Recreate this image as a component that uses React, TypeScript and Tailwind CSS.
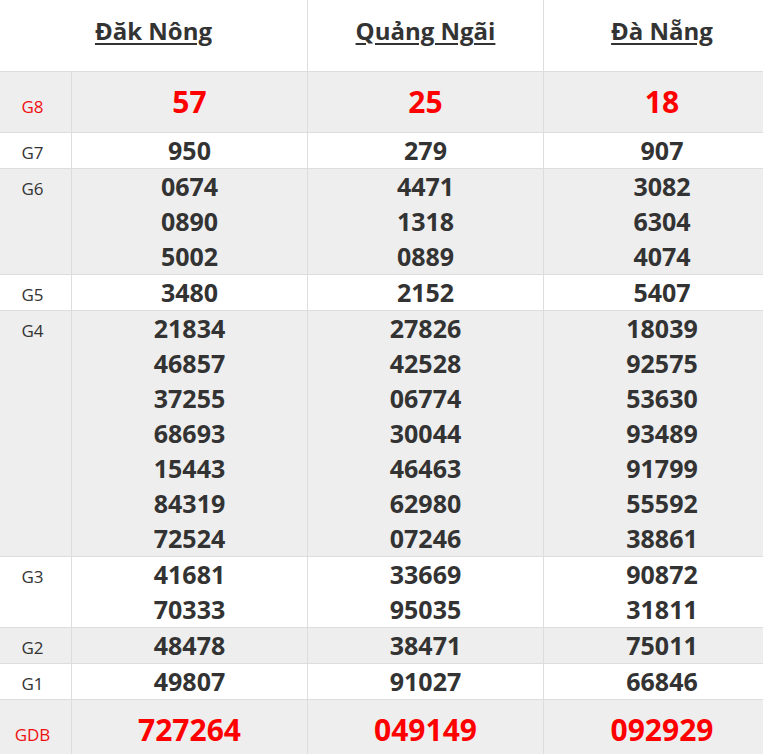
import React from "react";

type Row = {
  label: string;
  cols: string[][];
  big?: boolean;
  gray: boolean;
};

const rows: Row[] = [
  { label: "G8", cols: [["57"], ["25"], ["18"]], big: true, gray: true },
  { label: "G7", cols: [["950"], ["279"], ["907"]], gray: false },
  {
    label: "G6",
    cols: [
      ["0674", "0890", "5002"],
      ["4471", "1318", "0889"],
      ["3082", "6304", "4074"],
    ],
    gray: true,
  },
  { label: "G5", cols: [["3480"], ["2152"], ["5407"]], gray: false },
  {
    label: "G4",
    cols: [
      ["21834", "46857", "37255", "68693", "15443", "84319", "72524"],
      ["27826", "42528", "06774", "30044", "46463", "62980", "07246"],
      ["18039", "92575", "53630", "93489", "91799", "55592", "38861"],
    ],
    gray: true,
  },
  {
    label: "G3",
    cols: [
      ["41681", "70333"],
      ["33669", "95035"],
      ["90872", "31811"],
    ],
    gray: false,
  },
  { label: "G2", cols: [["48478"], ["38471"], ["75011"]], gray: true },
  { label: "G1", cols: [["49807"], ["91027"], ["66846"]], gray: false },
  { label: "GDB", cols: [["727264"], ["049149"], ["092929"]], big: true, gray: true },
];

export default function App() {
  return (
    <div
      className="w-[763px] h-[754px] overflow-hidden bg-white text-[#333]"
      style={{ fontFamily: '"Open Sans", "Noto Sans", sans-serif' }}
    >
      <div className="w-[780px]">
        <div className="grid grid-cols-[308px_236px_236px] border-b border-[#ddd] h-[72px] text-[24px] leading-[35px] font-bold">
          <div className="border-r border-[#ddd] text-center pt-[13px]">
            <a className="underline decoration-2 underline-offset-[3px] text-[#333]">Đăk Nông</a>
          </div>
          <div className="border-r border-[#ddd] text-center pt-[13px]">
            <a className="underline decoration-2 underline-offset-[3px] text-[#333]">Quảng Ngãi</a>
          </div>
          <div className="text-center pt-[13px]">
            <a className="underline decoration-2 underline-offset-[3px] text-[#333]">Đà Nẵng</a>
          </div>
        </div>
        {rows.map((r) => (
          <div
            key={r.label}
            className={
              "grid grid-cols-[72px_236px_236px_236px] border-b border-[#ddd] " +
              (r.gray ? "bg-[#eeeeee]" : "bg-white")
            }
          >
            <div
              className={
                "border-r border-[#ddd] text-center pr-[6px] text-[17px] leading-[24px] " +
                (r.big ? "pt-[23px] text-[#ee1111]" : "pt-[8px] text-[#333]")
              }
            >
              {r.label}
            </div>
            {r.cols.map((c, i) => (
              <div
                key={i}
                className={
                  "flex flex-col text-center font-bold " +
                  (i < 2 ? "border-r border-[#ddd] " : "") +
                  (r.big
                    ? "text-[30px] leading-[60px] text-[#ff0000]"
                    : "text-[25px] leading-[35px] text-[#333]")
                }
              >
                {c.map((n) => (
                  <div key={n}>{n}</div>
                ))}
              </div>
            ))}
          </div>
        ))}
      </div>
    </div>
  );
}
